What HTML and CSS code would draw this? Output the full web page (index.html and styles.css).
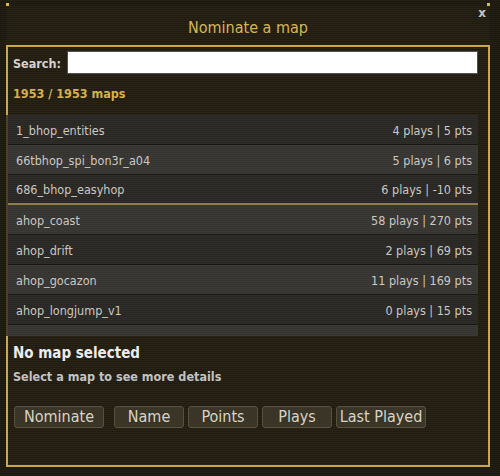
FILE: index.html
```html
<!DOCTYPE html>
<html lang="en">
<head>
  <meta charset="UTF-8" />
  <title>Nominate a map</title>
  <link rel="stylesheet" href="styles.css">
</head>
<body>
  <div class="window">
    <span class="corner corner-left"></span>
    <span class="corner corner-right"></span>

    <!-- Title bar -->
    <div class="title-bar">
      <h1 class="title">Nominate a map</h1>
      <button class="close-btn">x</button>
    </div>

    <!-- Main box -->
    <div class="box">
      <div class="search-row">
        <label class="search-label" for="search">Search:</label>
        <input class="search-input" id="search" type="text">
      </div>
      <p class="count">1953 / 1953 maps</p>

      <div class="map-list">
        <div class="map-row"><span>1_bhop_entities</span><span>4 plays | 5 pts</span></div>
        <div class="map-row"><span>66tbhop_spi_bon3r_a04</span><span>5 plays | 6 pts</span></div>
        <div class="map-row map-row-split"><span>686_bhop_easyhop</span><span>6 plays | -10 pts</span></div>
        <div class="map-row"><span>ahop_coast</span><span>58 plays | 270 pts</span></div>
        <div class="map-row"><span>ahop_drift</span><span>2 plays | 69 pts</span></div>
        <div class="map-row"><span>ahop_gocazon</span><span>11 plays | 169 pts</span></div>
        <div class="map-row"><span>ahop_longjump_v1</span><span>0 plays | 15 pts</span></div>
        <div class="map-row"><span></span><span></span></div>
      </div>

      <div class="details">
        <h2 class="details-title">No map selected</h2>
        <p class="details-text">Select a map to see more details</p>
      </div>

      <div class="button-row">
        <button class="game-btn btn-wide btn-first">Nominate</button>
        <button class="game-btn">Name</button>
        <button class="game-btn">Points</button>
        <button class="game-btn">Plays</button>
        <button class="game-btn btn-wide">Last Played</button>
      </div>
    </div>
  </div>
</body>
</html>
```

FILE: styles.css
```css
body {
  margin: 0;
  width: 500px;
  height: 476px;
  overflow: hidden;
  font-family: 'DejaVu Sans Condensed', 'DejaVu Sans', sans-serif;
  background: repeating-linear-gradient(
    to bottom,
    #241f15 0,
    #241f15 1px,
    #1b1810 1px,
    #1b1810 2px
  );
}

.window {
  position: relative;
  margin: 6px 10px 0 6px;
  background: repeating-linear-gradient(
    to bottom,
    #2a2416 0,
    #2a2416 1px,
    #201b10 1px,
    #201b10 2px
  );
}

/* little gold markers on the top corners */
.corner {
  position: absolute;
  top: -3px;
  width: 3px;
  height: 3px;
  background: #d8b850;
}
.corner-left { left: 0; }
.corner-right { right: 0; }

.title-bar {
  position: relative;
  height: 39px;
  display: flex;
  align-items: center;
  justify-content: center;
}

.title {
  margin: 3px 0 0;
  font-size: 16px;
  font-weight: normal;
  color: #d6b654;
}

.close-btn {
  position: absolute;
  top: 0;
  right: 4px;
  padding: 0;
  border: none;
  background: none;
  color: #c4c4c4;
  font-family: 'DejaVu Sans', sans-serif;
  font-weight: bold;
  font-size: 12px;
  line-height: 14px;
}

.box {
  height: 418px;
  border: 2px solid #c9a846;
}

.search-row {
  display: flex;
  align-items: center;
  padding: 4px 10px 0 5px;
}

.search-label {
  font-size: 12.5px;
  font-weight: bold;
  color: #d2d2d2;
  margin: 1px 6px 0 0;
}

.search-input {
  flex: 1;
  height: 23px;
  box-sizing: border-box;
  border: 1px solid #505050;
  background: #fff;
  margin: 0;
}

.count {
  margin: 0;
  padding: 12px 5px 13px;
  font-size: 12.5px;
  line-height: 16px;
  font-weight: bold;
  color: #d4b04c;
}

.map-list {
  height: 221px;
  overflow: hidden;
  margin-left: -2px;
  margin-right: 10px;
  border-left: 2px solid #4a4126;
}

.map-row {
  display: flex;
  justify-content: space-between;
  align-items: center;
  height: 29px;
  padding: 1px 6px 0 8px;
  box-sizing: border-box;
  height: 30px;
  border-bottom: 1px solid #191711;
  font-size: 12.5px;
  color: #c9c7c2;
  background: repeating-linear-gradient(
    to bottom,
    #2f2d29 0,
    #2f2d29 1px,
    #292724 1px,
    #292724 2px
  );
}

.map-row:nth-child(even) {
  background: repeating-linear-gradient(
    to bottom,
    #3c3a37 0,
    #3c3a37 1px,
    #363431 1px,
    #363431 2px
  );
}

.map-row-split {
  border-bottom: 2px solid #8e7c4c;
}

.details {
  padding: 8px 5px 0;
}

.details-title {
  margin: 0;
  font-size: 15px;
  line-height: 18px;
  font-weight: bold;
  color: #ececec;
}

.details-text {
  margin: 7px 0 0;
  font-size: 12.5px;
  line-height: 16px;
  font-weight: bold;
  color: #c2c2c2;
}

.button-row {
  display: flex;
  gap: 4px;
  padding: 21px 6px 0;
}

.game-btn {
  width: 70px;
  height: 22px;
  padding: 0;
  border: 1px solid #565040;
  border-radius: 3px;
  background: #3a3527;
  color: #d9d3c4;
  font-family: 'DejaVu Sans Condensed', 'DejaVu Sans', sans-serif;
  font-size: 16px;
  line-height: 20px;
}

.btn-wide { width: 90px; }
.btn-first { margin-right: 6px; }
```
